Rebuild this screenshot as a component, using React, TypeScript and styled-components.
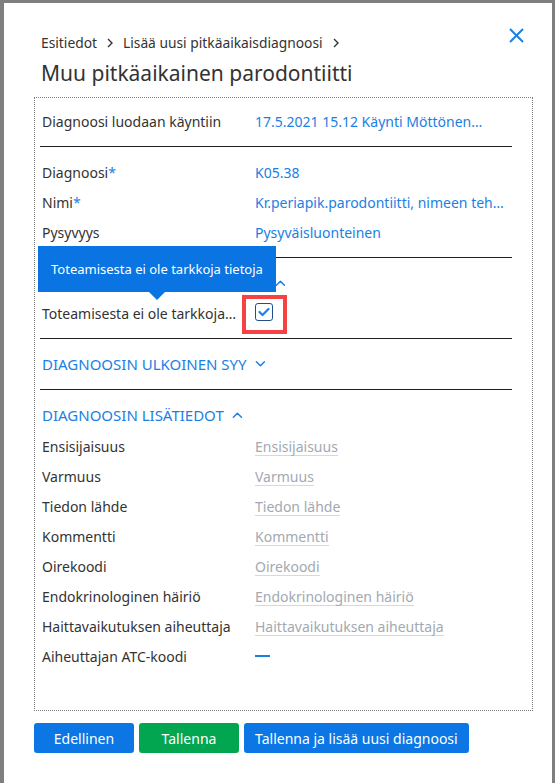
import React from "react";
import styled, { createGlobalStyle } from "styled-components";

const GlobalStyle = createGlobalStyle`
    html, body {
        margin: 0;
        background: #7f7f7f;
        font-family: "Noto Sans", "Open Sans", sans-serif;
        color: #333;
    }
    * {
        box-sizing: border-box;
    }
`;

const Backdrop = styled.div`
    height: 783px;
    padding: 3px 3px 0 4px;
    overflow: hidden;
`;

const Modal = styled.div`
    height: 100%;
    background: #fff;
    padding: 0 19px 0 30px;
`;

const Header = styled.div`
    display: flex;
    align-items: flex-start;
    padding: 20px 0 9px 7px;
`;

const HeaderText = styled.div`
    flex: 1;
    padding-top: 10px;
`;

const Breadcrumbs = styled.div`
    display: flex;
    align-items: center;
    gap: 10px;
    font-size: 13.8px;
    line-height: 20px;
    color: #333;
`;

const Title = styled.h1`
    margin: 5px 0 0;
    font-size: 21px;
    font-weight: 400;
    line-height: 30px;
    color: #333;
`;

const CloseButton = styled.button`
    width: 24px;
    height: 24px;
    margin-right: 5px;
    padding: 0;
    border: 0;
    background: none;
    display: flex;
    align-items: center;
    justify-content: center;
    cursor: pointer;
`;

const FormBox = styled.div`
    border: 1px dotted #7a7a7a;
    height: 614px;
    padding: 8px 20px 0 5px;
`;

const Row = styled.div`
    position: relative;
    display: grid;
    grid-template-columns: 215px 1fr;
    height: 30px;
    align-items: center;
    font-size: 14px;
`;

const Label = styled.div`
    padding-left: 2px;
    padding-right: 17px;
    white-space: nowrap;
    overflow: hidden;
    text-overflow: ellipsis;
    color: #333;
`;

const Required = styled.span`
    color: #1b80e4;
`;

const Value = styled.div`
    color: #1b80e4;
    white-space: nowrap;
    overflow: hidden;
    text-overflow: ellipsis;
    padding-right: 6px;
`;

const Placeholder = styled.span`
    display: inline-block;
    line-height: 17px;
    color: #a2a9b2;
    border-bottom: 1px solid #d3d9e0;
`;

const EmptyDash = styled.span`
    display: block;
    width: 15px;
    height: 1.5px;
    background: #1b80e4;
`;

const Divider = styled.div`
    height: 1px;
    background: #1e1e1e;
    margin: 10px 0;
`;

const SectionHeader = styled.div<{ gap?: number }>`
    display: flex;
    align-items: center;
    gap: 8px;
    height: 30px;
    padding-left: 2px;
    margin-bottom: ${p => p.gap ?? 0}px;
    font-size: 15px;
    color: #1b80e4;
    text-transform: uppercase;
`;

const CheckCell = styled.div`
    position: relative;
    width: 18px;
    height: 18px;
    margin-top: -2px;
`;

const Checkbox = styled.div`
    width: 18px;
    height: 18px;
    border: 1.5px solid #1d4f8c;
    border-radius: 3px;
    background: #fff;
    display: flex;
    align-items: center;
    justify-content: center;
`;

const Highlight = styled.div`
    position: absolute;
    left: -13px;
    top: -8px;
    width: 45px;
    height: 39px;
    border: 4px solid #f54343;
`;

const Tooltip = styled.div`
    position: absolute;
    left: -2px;
    top: -52px;
    height: 46px;
    padding: 0 13px;
    display: flex;
    align-items: center;
    background: #0a74e2;
    color: #fff;
    font-size: 13px;
    white-space: nowrap;
    z-index: 2;

    &::after {
        content: "";
        position: absolute;
        left: 111px;
        top: 100%;
        border-left: 8px solid transparent;
        border-right: 8px solid transparent;
        border-top: 8px solid #0a74e2;
    }
`;

const Buttons = styled.div`
    display: flex;
    gap: 5px;
    margin-top: 12px;
`;

const Button = styled.button<{ variant?: "primary" | "success" }>`
    min-width: 100px;
    height: 30px;
    padding: 0 11px;
    border: 0;
    border-radius: 3px;
    background: ${p => (p.variant === "success" ? "#03a650" : "#0b76e4")};
    color: #fff;
    font-family: inherit;
    font-size: 14px;
    cursor: pointer;
`;

const Chevron: React.FC<{ up?: boolean; size?: number }> = ({ up, size = 6 }) => (
    <svg width={size * 1.8} height={size} viewBox="0 0 10 6" fill="none">
        <path
            d={up ? "M1 5.2L5 1.2L9 5.2" : "M1 0.8L5 4.8L9 0.8"}
            stroke="#1b80e4"
            strokeWidth="1.5"
            strokeLinecap="round"
            strokeLinejoin="round"
        />
    </svg>
);

const Crumb = () => (
    <svg width="6" height="10" viewBox="0 0 6 10" fill="none">
        <path d="M1 1L5 5L1 9" stroke="#333" strokeWidth="1.4" />
    </svg>
);

const extraFields = [
    "Ensisijaisuus",
    "Varmuus",
    "Tiedon lähde",
    "Kommentti",
    "Oirekoodi",
    "Endokrinologinen häiriö",
    "Haittavaikutuksen aiheuttaja",
];

export default function App() {
    return (
        <>
            <GlobalStyle />
            <Backdrop>
                <Modal>
                    <Header>
                        <HeaderText>
                            <Breadcrumbs>
                                <span>Esitiedot</span>
                                <Crumb />
                                <span>Lisää uusi pitkäaikaisdiagnoosi</span>
                                <Crumb />
                            </Breadcrumbs>
                            <Title>Muu pitkäaikainen parodontiitti</Title>
                        </HeaderText>
                        <CloseButton aria-label="Sulje">
                            <svg width="15" height="15" viewBox="0 0 15 15">
                                <path d="M1 1L14 14M14 1L1 14" stroke="#1b80e4" strokeWidth="2" />
                            </svg>
                        </CloseButton>
                    </Header>

                    <FormBox>
                        <Row>
                            <Label>Diagnoosi luodaan käyntiin</Label>
                            <Value>17.5.2021 15.12 Käynti Möttönen…</Value>
                        </Row>
                        <Divider />
                        <Row>
                            <Label>
                                Diagnoosi<Required>*</Required>
                            </Label>
                            <Value>K05.38</Value>
                        </Row>
                        <Row>
                            <Label>
                                Nimi<Required>*</Required>
                            </Label>
                            <Value>Kr.periapik.parodontiitti, nimeen tehty tarkennus</Value>
                        </Row>
                        <Row>
                            <Label>Pysyvyys</Label>
                            <Value>Pysyväisluonteinen</Value>
                        </Row>
                        <Divider />
                        <SectionHeader>
                            Diagnoosin toteamistiedot
                            <Chevron up />
                        </SectionHeader>
                        <Row>
                            <Tooltip>Toteamisesta ei ole tarkkoja tietoja</Tooltip>
                            <Label>Toteamisesta ei ole tarkkoja tietoja</Label>
                            <CheckCell>
                                <Checkbox>
                                    <svg width="12" height="10" viewBox="0 0 12 10" fill="none">
                                        <path
                                            d="M1.5 5L4.5 8L10.5 2"
                                            stroke="#1b80e4"
                                            strokeWidth="2.2"
                                            strokeLinecap="round"
                                            strokeLinejoin="round"
                                        />
                                    </svg>
                                </Checkbox>
                                <Highlight />
                            </CheckCell>
                        </Row>
                        <Divider />
                        <SectionHeader>
                            Diagnoosin ulkoinen syy
                            <Chevron />
                        </SectionHeader>
                        <Divider />
                        <SectionHeader gap={1}>
                            Diagnoosin lisätiedot
                            <Chevron up />
                        </SectionHeader>
                        {extraFields.map(field => (
                            <Row key={field}>
                                <Label>{field}</Label>
                                <Value>
                                    <Placeholder>{field}</Placeholder>
                                </Value>
                            </Row>
                        ))}
                        <Row>
                            <Label>Aiheuttajan ATC-koodi</Label>
                            <Value>
                                <EmptyDash />
                            </Value>
                        </Row>
                    </FormBox>

                    <Buttons>
                        <Button variant="primary">Edellinen</Button>
                        <Button variant="success">Tallenna</Button>
                        <Button variant="primary">Tallenna ja lisää uusi diagnoosi</Button>
                    </Buttons>
                </Modal>
            </Backdrop>
        </>
    );
}
